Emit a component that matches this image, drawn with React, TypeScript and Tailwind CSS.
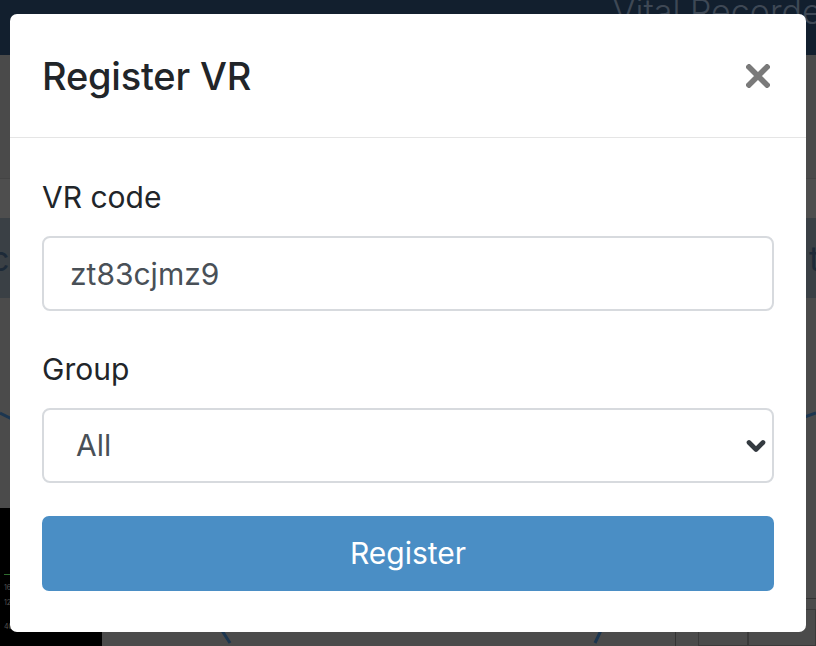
import { ChevronDown } from 'lucide-react';

const font = { fontFamily: 'Inter, "Liberation Sans", sans-serif' };

function Backdrop() {
  return (
    <div className="flex h-[646px] w-[816px] flex-col overflow-hidden bg-[#4b4b4b]">
      <div className="flex h-[55px] shrink-0 justify-end overflow-hidden bg-[#121f2e]">
        <span className="-mt-[14px] mr-[-18px] whitespace-nowrap text-[34px] font-light text-[#3e4855]">Vital Recorder</span>
      </div>
      <div className="h-[123px] shrink-0 bg-[#4a4a4a]" />
      <div className="h-[40px] shrink-0 border-t border-[#444] bg-[#4e4e4e]" />
      <div className="flex h-[80px] shrink-0 items-center justify-between bg-[#3a4045] text-[34px] text-[#1d2a38]">
        <span className="-ml-[10px]">c</span>
        <span className="-mr-[4px]">t</span>
      </div>
      <div className="relative flex flex-1">
        <svg className="absolute inset-0" width="816" height="348" viewBox="0 0 816 348">
          <path d="M0 115 Q 120 170 230 345" fill="none" stroke="#1c3650" strokeWidth="3" />
          <path d="M816 115 Q 680 160 595 345" fill="none" stroke="#1c3650" strokeWidth="3" />
        </svg>
        <div className="mt-[210px] flex h-[138px] w-[102px] flex-col bg-black pl-[4px] text-[7px] text-[#555]">
          <div className="mt-[66px] h-px w-full bg-[#2e6b2e]" />
          <span className="mt-[8px]">160</span>
          <span className="mt-[4px]">120</span>
          <span className="mt-[14px]">40</span>
        </div>
        <div className="flex-1" />
        <div className="mt-[300px] flex h-[48px] w-[141px] border-l border-t border-[#333] pl-[22px] pt-[10px]">
          <div className="h-full w-[50px] border border-[#3a3a3a]" />
          <div className="h-full flex-1 border border-[#3a3a3a]" />
        </div>
      </div>
    </div>
  );
}

export default function App() {
  return (
    <div className="relative h-[646px] w-[816px] overflow-hidden" style={font}>
      <Backdrop />
      <div className="absolute left-[10px] top-[14px] flex h-[618px] w-[796px] flex-col rounded-[7px] bg-white">
        <div className="flex h-[124px] items-center justify-between border-b border-[#e5e5e5] pl-[32px] pr-[36px]">
          <h4 className="pt-[2px] text-[38px] font-medium tracking-[-0.2px] text-[#212529]">Register VR</h4>
          <svg width="24" height="24" viewBox="0 0 24 24">
            <path d="M3 3 L21 21 M21 3 L3 21" stroke="#7a7a7a" strokeWidth="5.5" strokeLinecap="square" />
          </svg>
        </div>
        <div className="flex flex-col px-[32px] pt-[40px]">
          <label className="mb-[19px] h-[39px] text-[30px] leading-[39px] text-[#212529]">VR code</label>
          <input
            readOnly
            value="zt83cjmz9"
            className="h-[75px] rounded-[8px] border-2 border-[#d7dade] px-[26px] text-[30px] text-[#495057] outline-none"
          />
          <label className="mb-[19px] mt-[39px] h-[39px] text-[30px] leading-[39px] text-[#212529]">Group</label>
          <div className="flex h-[75px] items-center justify-between rounded-[8px] border-2 border-[#d7dade] pl-[32px] pr-[2px] text-[30px] text-[#495057]">
            <span>All</span>
            <ChevronDown className="h-[28px] w-[28px] text-[#343a40]" strokeWidth={4} />
          </div>
          <button className="mt-[33px] h-[75px] rounded-[7px] bg-[#4a8ec5] text-[30px] text-white">Register</button>
        </div>
      </div>
    </div>
  );
}
